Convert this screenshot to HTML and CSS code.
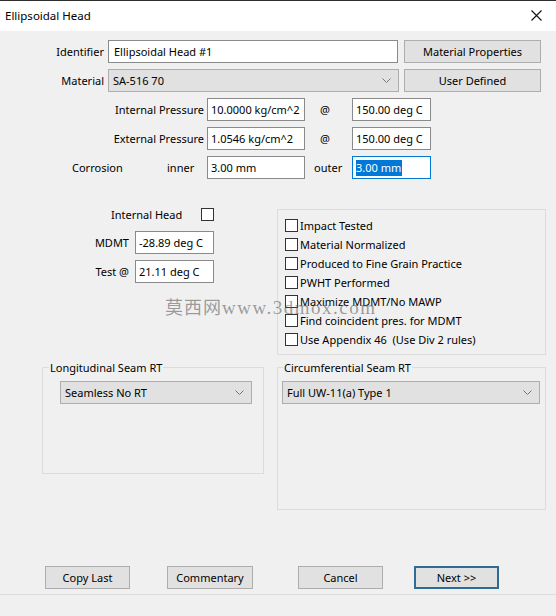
FILE: index.html
```html
<!DOCTYPE html>
<html lang="en">
<head>
    <meta charset="UTF-8">
    <title>Ellipsoidal Head</title>
    <link rel="stylesheet" href="styles.css">
</head>
<body>
    <div class="window">
        <div class="titlebar">
            <span class="title">Ellipsoidal Head</span>
            <svg class="close" width="11" height="11" viewBox="0 0 11 11">
                <path d="M0.5 0.5L10.5 10.5M10.5 0.5L0.5 10.5" stroke="#111" stroke-width="1.1"/>
            </svg>
        </div>

        <div class="content">
            <div class="row top-row">
                <span class="lbl lbl-id">Identifier</span>
                <input class="field id-field" type="text" value="Ellipsoidal Head #1">
                <button class="btn side-btn">Material Properties</button>
            </div>
            <div class="row top-row mat-row">
                <span class="lbl lbl-id">Material</span>
                <div class="combo mat-combo">
                    <span>SA-516 70</span>
                    <svg width="9" height="5" viewBox="0 0 9 5"><path d="M0.5 0.5L4.5 4.5L8.5 0.5" fill="none" stroke="#777" stroke-width="1"/></svg>
                </div>
                <button class="btn side-btn">User Defined</button>
            </div>

            <div class="row press-row">
                <span class="lbl lbl-press">Internal Pressure</span>
                <input class="field f-val" type="text" value="10.0000 kg/cm^2">
                <span class="at">@</span>
                <input class="field f-temp" type="text" value="150.00 deg C">
            </div>
            <div class="row press-row">
                <span class="lbl lbl-press">External Pressure</span>
                <input class="field f-val" type="text" value="1.0546 kg/cm^2">
                <span class="at">@</span>
                <input class="field f-temp" type="text" value="150.00 deg C">
            </div>
            <div class="row press-row">
                <span class="corr">Corrosion</span>
                <span class="inner">inner</span>
                <input class="field f-val" type="text" value="3.00 mm">
                <span class="outer">outer</span>
                <div class="field f-temp focused"><span class="sel">3.00 mm</span></div>
            </div>

            <div class="middle">
                <div class="temps">
                    <div class="head-row">
                        <span class="head-lbl">Internal Head</span>
                        <span class="check"></span>
                    </div>
                    <div class="row temp-row">
                        <span class="lbl lbl-temp">MDMT</span>
                        <input class="field f-mdmt" type="text" value="-28.89 deg C">
                    </div>
                    <div class="row temp-row">
                        <span class="lbl lbl-temp">Test @</span>
                        <input class="field f-mdmt" type="text" value="21.11 deg C">
                    </div>
                </div>
                <div class="options">
                    <div class="opt"><span class="check"></span>Impact Tested</div>
                    <div class="opt"><span class="check"></span>Material Normalized</div>
                    <div class="opt"><span class="check"></span>Produced to Fine Grain Practice</div>
                    <div class="opt"><span class="check"></span>PWHT Performed</div>
                    <div class="opt"><span class="check"></span>Maximize MDMT/No MAWP</div>
                    <div class="opt"><span class="check"></span>Find coincident pres. for MDMT</div>
                    <div class="opt"><span class="check"></span>Use Appendix 46&nbsp; (Use Div 2 rules)</div>
                </div>
            </div>

            <div class="seams">
                <fieldset class="seam seam-long">
                    <legend>Longitudinal Seam RT</legend>
                    <div class="combo long-combo">
                        <span>Seamless No RT</span>
                        <svg width="9" height="5" viewBox="0 0 9 5"><path d="M0.5 0.5L4.5 4.5L8.5 0.5" fill="none" stroke="#777" stroke-width="1"/></svg>
                    </div>
                </fieldset>
                <fieldset class="seam seam-circ">
                    <legend>Circumferential Seam RT</legend>
                    <div class="combo circ-combo">
                        <span>Full UW-11(a) Type 1</span>
                        <svg width="9" height="5" viewBox="0 0 9 5"><path d="M0.5 0.5L4.5 4.5L8.5 0.5" fill="none" stroke="#777" stroke-width="1"/></svg>
                    </div>
                </fieldset>
            </div>

            <div class="actions">
                <button class="btn act copy">Copy Last</button>
                <button class="btn act comment">Commentary</button>
                <button class="btn act cancel">Cancel</button>
                <button class="btn act next">Next &gt;&gt;</button>
            </div>
        </div>

        <div class="statusline"></div>

        <!-- watermark over the screenshot -->
        <div class="watermark"><span class="wm-cjk">莫西网</span>www.3dmox.com</div>
    </div>
</body>
</html>
```

FILE: styles.css
```css
* {
    box-sizing: border-box;
}
body {
    margin: 0;
    background: #f0f0f0;
    font-family: "Noto Sans", "Liberation Sans", sans-serif;
    font-size: 11px;
    color: #000;
}
.window {
    position: relative;
    width: 556px;
    height: 616px;
    display: flex;
    flex-direction: column;
    overflow: hidden;
}
.titlebar {
    height: 31px;
    flex: none;
    background: #fff;
    border-top: 1px solid #2e2e2e;
    display: flex;
    align-items: center;
    justify-content: space-between;
    padding: 0 14px 0 5px;
}
.title {
    font-size: 11.5px;
    margin-top: -1px;
}
.close {
    margin-top: -1px;
}
.content {
    flex: none;
}
.row {
    display: flex;
    align-items: center;
}
.lbl {
    text-align: right;
    flex: none;
}
.field {
    height: 23px;
    border: 1px solid #8a8a8a;
    background: #fff;
    padding: 0 3px;
    font: inherit;
    color: #000;
    outline: none;
    flex: none;
}
.btn {
    height: 23px;
    background: #e1e1e1;
    border: 1px solid #adadad;
    font: inherit;
    color: #000;
    padding: 0;
    flex: none;
}
.combo {
    height: 23px;
    background: #e1e1e1;
    border: 1px solid #adadad;
    display: flex;
    align-items: center;
    justify-content: space-between;
    padding: 0 7px 0 4px;
    flex: none;
}

/* identifier / material */
.top-row {
    margin-top: 9px;
}
.mat-row {
    margin-top: 6px;
}
.lbl-id {
    width: 104px;
}
.id-field {
    margin-left: 4px;
    width: 290px;
    padding-left: 5px;
}
.mat-combo {
    margin-left: 4px;
    width: 291px;
}
.side-btn {
    margin-left: auto;
    margin-right: 15px;
    width: 137px;
}

/* pressures */
.press-row {
    margin-top: 6px;
}
.lbl-press {
    width: 204px;
}
.f-val {
    margin-left: 3px;
    width: 98px;
}
.at {
    width: 47px;
    text-align: center;
    padding-right: 7px;
}
.f-temp {
    width: 79px;
}
.corr {
    margin-left: 72px;
    width: 95px;
}
.inner {
    width: 37px;
}
.outer {
    width: 47px;
    padding-left: 9px;
}
.focused {
    border-color: #0078d7;
    display: flex;
    align-items: center;
}
.sel {
    background: #0078d7;
    color: #fff;
    line-height: 16px;
    padding-right: 1px;
}

/* middle block */
.middle {
    display: flex;
    align-items: flex-start;
    margin-top: 28px;
}
.temps {
    width: 277px;
    flex: none;
}
.head-row {
    display: flex;
    align-items: center;
    height: 15px;
    padding-left: 111px;
}
.head-lbl {
    width: 90px;
}
.temp-row {
    margin-top: 6px;
}
.head-row + .temp-row {
    margin-top: 9px;
}
.lbl-temp {
    width: 129px;
}
.f-mdmt {
    margin-left: 6px;
    width: 79px;
}
.check {
    display: inline-block;
    width: 13px;
    height: 13px;
    border: 1px solid #333;
    background: #fff;
    flex: none;
}
.options {
    margin-top: 2px;
    width: 269px;
    height: 146px;
    border: 1px solid #dcdcdc;
    padding: 6px 0 0 7px;
}
.opt {
    display: flex;
    align-items: center;
    height: 19px;
}
.opt .check {
    margin-right: 2px;
}

/* seam groups */
.seams {
    display: flex;
    align-items: flex-start;
    margin-top: 5px;
}
.seam {
    margin: 0;
    padding: 0;
    border: 1px solid #dcdcdc;
    min-width: 0;
}
.seam legend {
    padding: 0 1px;
    line-height: 15px;
}
.seam-long {
    margin-left: 42px;
    width: 222px;
    height: 114px;
}
.seam-long legend {
    margin-left: 6px;
}
.seam-circ {
    margin-left: 13px;
    width: 269px;
    height: 150px;
}
.seam-circ legend {
    margin-left: 5px;
}
.long-combo {
    margin: 6px 0 0 17px;
    width: 192px;
}
.circ-combo {
    margin: 6px 0 0 4px;
    width: 258px;
}

/* bottom buttons */
.actions {
    display: flex;
    margin-top: 56px;
}
.act {
    width: 85px;
}
.copy {
    margin-left: 45px;
}
.comment {
    margin-left: 37px;
    width: 86px;
}
.cancel {
    margin-left: 45px;
}
.next {
    margin-left: 31px;
    border: 2px solid #2f6c95;
}
.statusline {
    flex: 1;
    margin-top: 5px;
    border-top: 1px solid #dcdcdc;
}

.watermark {
    position: absolute;
    left: 165px;
    top: 296px;
    font-family: "Liberation Serif", serif;
    font-size: 19px;
    line-height: 20px;
    letter-spacing: 1.5px;
    color: rgba(95, 95, 95, 0.6);
    white-space: nowrap;
    pointer-events: none;
}
.wm-cjk {
    font-family: "Noto Sans CJK SC", sans-serif;
    font-size: 18px;
    letter-spacing: 1px;
}
```
